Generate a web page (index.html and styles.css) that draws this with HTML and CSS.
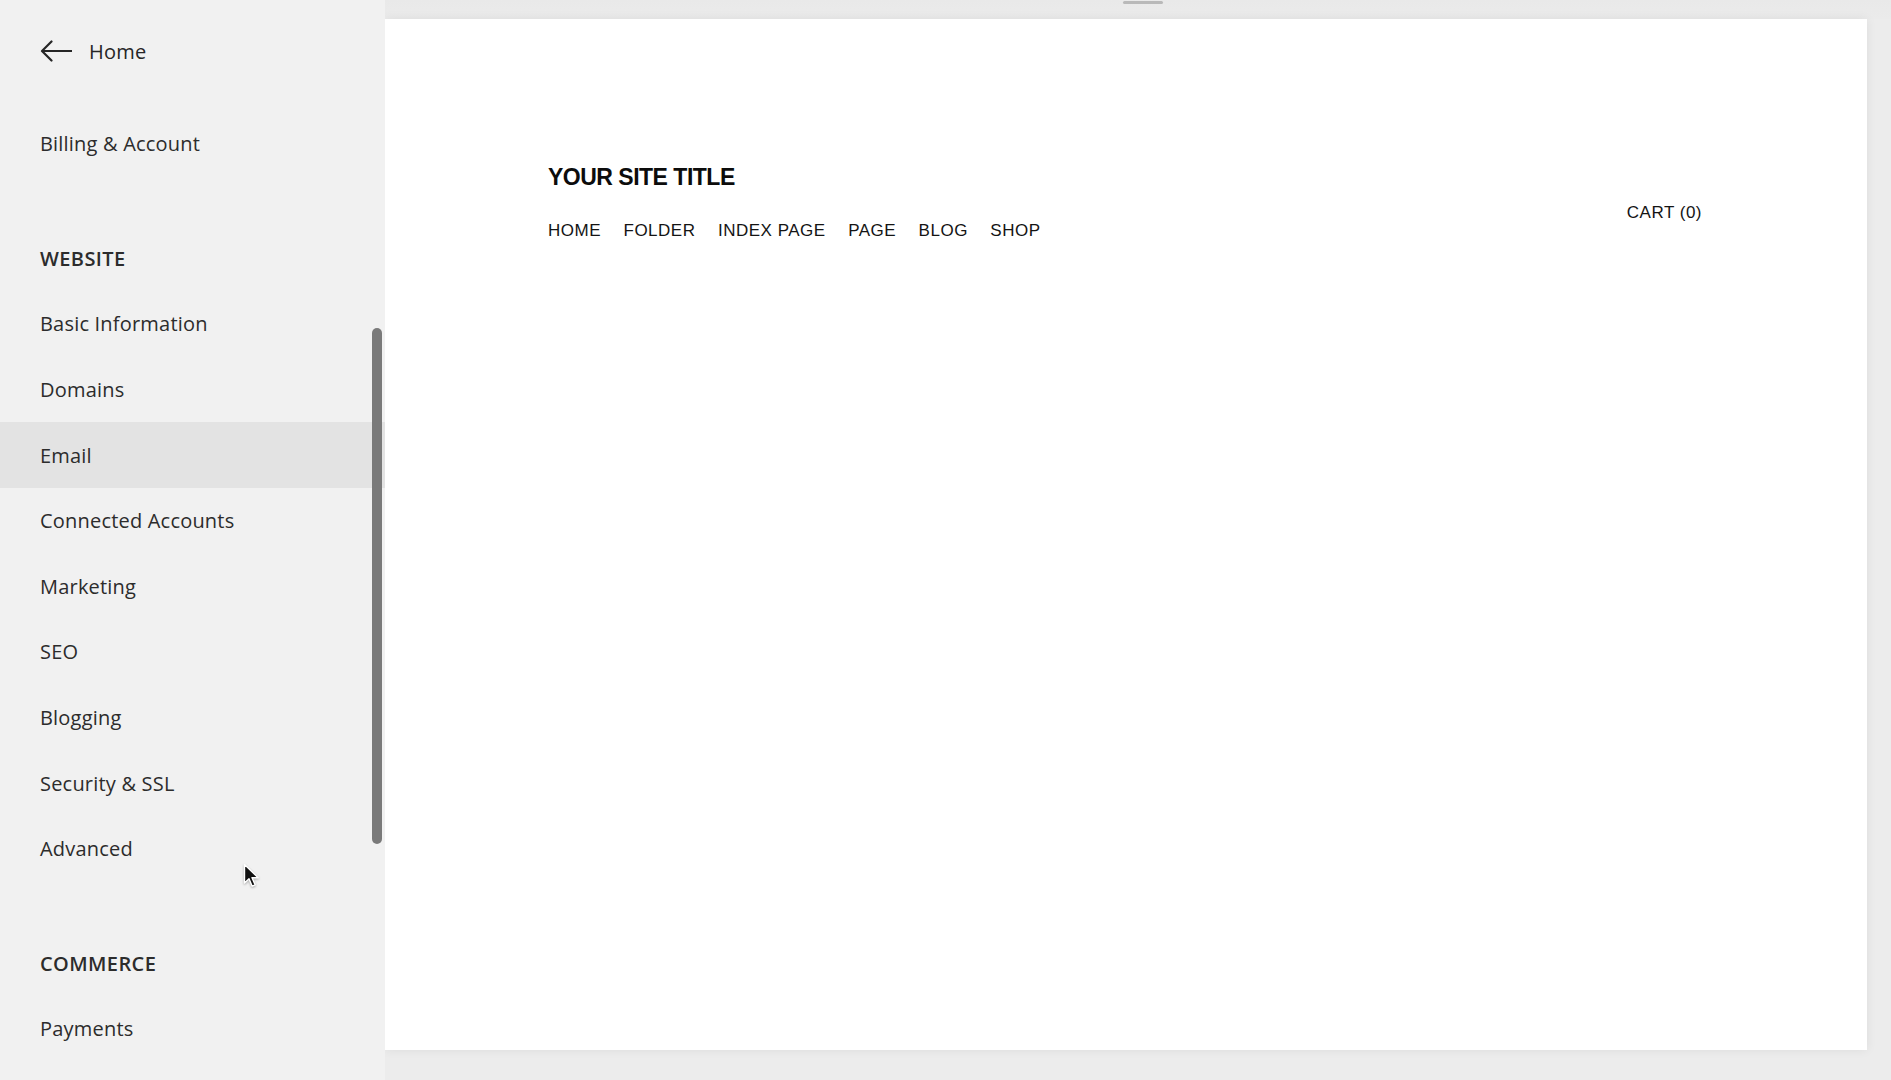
FILE: index.html
```html
<!DOCTYPE html>
<html lang="en">
<head>
<meta charset="utf-8">
<title>Settings</title>
<link rel="stylesheet" href="styles.css">
</head>
<body>
<div class="app">
  <aside class="sidebar">
    <a class="back">
      <svg class="back-icon" width="32" height="22" viewBox="0 0 32 22" aria-hidden="true">
        <path d="M31.5 11H2.5M11.5 1.5L2 11l9.5 9.5" fill="none" stroke="#262626" stroke-width="2.2" stroke-linecap="round" stroke-linejoin="round"/>
      </svg>
      <span>Home</span>
    </a>
    <div class="item item-first">Billing &amp; Account</div>
    <div class="section">
      <div class="heading">WEBSITE</div>
      <div class="item">Basic Information</div>
      <div class="item">Domains</div>
      <div class="item active">Email</div>
      <div class="item">Connected Accounts</div>
      <div class="item">Marketing</div>
      <div class="item">SEO</div>
      <div class="item">Blogging</div>
      <div class="item">Security &amp; SSL</div>
      <div class="item">Advanced</div>
    </div>
    <div class="section">
      <div class="heading">COMMERCE</div>
      <div class="item">Payments</div>
    </div>
    <div class="scroll-thumb"></div>
    <svg class="cursor" width="18" height="26" viewBox="0 0 18 26" aria-hidden="true">
      <path d="M1.5 1.5V20L6 15.8L9.2 23.2L12.2 21.9L9 14.7H15.2Z" fill="#111" stroke="#fff" stroke-width="1.4" stroke-linejoin="round"/>
    </svg>
  </aside>
  <main class="stage">
    <div class="topbar"><span class="handle"></span></div>
    <section class="preview">
      <header class="site-header">
        <div class="brand">
          <div class="site-title">YOUR SITE TITLE</div>
          <nav class="site-nav">
            <a>HOME</a>
            <a>FOLDER</a>
            <a>INDEX PAGE</a>
            <a>PAGE</a>
            <a>BLOG</a>
            <a>SHOP</a>
          </nav>
        </div>
        <a class="cart">CART (0)</a>
      </header>
    </section>
  </main>
</div>
</body>
</html>
```

FILE: styles.css
```css
* { box-sizing: border-box; }

html, body {
  margin: 0;
  padding: 0;
  width: 1891px;
  height: 1080px;
  overflow: hidden;
  background: #ececec;
}

.app {
  display: flex;
  width: 1891px;
  height: 1080px;
}

/* Sidebar */
.sidebar {
  position: relative;
  width: 385px;
  flex: 0 0 385px;
  height: 1080px;
  background: #f1f1f1;
  padding-top: 31px;
  font-family: "Open Sans", "Liberation Sans", sans-serif;
  font-size: 20px;
  letter-spacing: 0.2px;
  color: #2c2c2c;
  overflow: hidden;
}

.back {
  display: flex;
  align-items: center;
  gap: 17px;
  height: 40px;
  padding-left: 40px;
  color: #262626;
  text-decoration: none;
}

.back-icon { display: block; }

.item,
.heading {
  display: flex;
  align-items: center;
  height: 65.6px;
  padding-left: 40px;
}

.item-first { margin-top: 40px; }

.heading {
  font-weight: 600;
  letter-spacing: 0.4px;
  color: #2c2c2c;
}

.item.active {
  background: #e3e3e3;
}

.section { margin-top: 49px; }

.scroll-thumb {
  position: absolute;
  left: 372px;
  top: 328px;
  width: 10px;
  height: 516px;
  border-radius: 5px;
  background: #7a7a7a;
}

.cursor {
  position: absolute;
  left: 243px;
  top: 863px;
  filter: drop-shadow(0 1px 1px rgba(0, 0, 0, 0.3));
}

/* Stage */
.stage {
  flex: 1;
  display: flex;
  flex-direction: column;
  height: 1080px;
}

.topbar {
  height: 19px;
  flex: 0 0 19px;
  display: flex;
  justify-content: center;
  padding-left: 10px;
  background: linear-gradient(#e9e9e9, #ebebeb);
}

.handle {
  display: block;
  width: 40px;
  height: 3px;
  margin-top: 1px;
  border-radius: 2px;
  background: #b9b9b9;
}

.preview {
  height: 1031px;
  width: 1482px;
  background: #fff;
  box-shadow: 0 0 10px rgba(0, 0, 0, 0.07);
  padding: 143px 165px 0 163px;
}

.site-header {
  display: flex;
  justify-content: space-between;
  align-items: flex-start;
  font-family: "Liberation Sans", Arial, sans-serif;
  color: #111;
}

.site-title {
  font-size: 23px;
  line-height: 30px;
  font-weight: 700;
  letter-spacing: -0.5px;
  color: #0c0c0c;
}

.site-nav {
  display: flex;
  gap: 22.5px;
  margin-top: 27px;
  font-size: 17px;
  line-height: 24px;
  letter-spacing: 0.5px;
}

.site-nav a,
.cart {
  color: #141414;
  text-decoration: none;
}

.cart {
  margin-top: 39px;
  font-size: 17px;
  line-height: 24px;
  letter-spacing: 0.5px;
}
```
